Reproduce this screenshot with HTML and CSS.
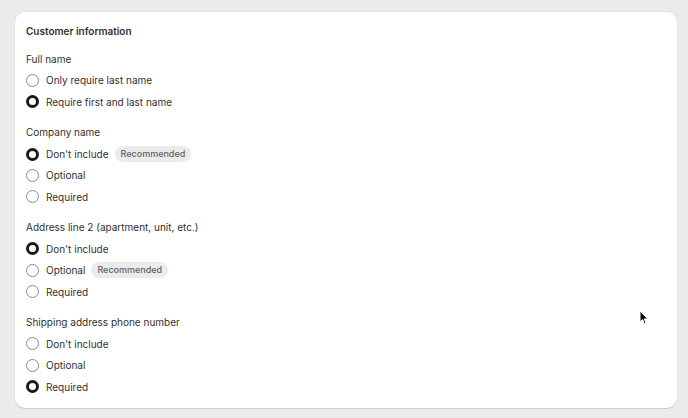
FILE: index.html
```html
<!DOCTYPE html>
<html lang="en">
<head>
    <meta charset="UTF-8">
    <meta name="viewport" content="width=device-width, initial-scale=1.0">
    <title>Customer information</title>
    <link rel="stylesheet" href="styles.css">
</head>
<body>
    <div class="card">
        <h2 class="card-title">Customer information</h2>

        <div class="group">
            <div class="group-label">Full name</div>
            <label class="option"><span class="radio"></span>Only require last name</label>
            <label class="option"><span class="radio checked"></span>Require first and last name</label>
        </div>

        <div class="group">
            <div class="group-label">Company name</div>
            <label class="option"><span class="radio checked"></span>Don't include <span class="badge">Recommended</span></label>
            <label class="option"><span class="radio"></span>Optional</label>
            <label class="option"><span class="radio"></span>Required</label>
        </div>

        <div class="group">
            <div class="group-label">Address line 2 (apartment, unit, etc.)</div>
            <label class="option"><span class="radio checked"></span>Don't include</label>
            <label class="option"><span class="radio"></span>Optional <span class="badge">Recommended</span></label>
            <label class="option"><span class="radio"></span>Required</label>
        </div>

        <div class="group">
            <div class="group-label">Shipping address phone number</div>
            <label class="option"><span class="radio"></span>Don't include</label>
            <label class="option"><span class="radio"></span>Optional</label>
            <label class="option"><span class="radio checked"></span>Required</label>
        </div>
    </div>

    <!-- mouse pointer -->
    <svg class="cursor" width="10" height="15" viewBox="0 0 10 15">
        <path d="M1 1 L1 12 L3.6 9.6 L5.4 13.8 L7 13.1 L5.3 9 L8.8 9 Z" fill="#111" stroke="#fff" stroke-width="1"/>
    </svg>
</body>
</html>
```

FILE: styles.css
```css
body {
    margin: 0;
    padding: 12px 11px 9px 15px;
    background: #ebebeb;
    font-family: Inter, "Noto Sans", Arial, sans-serif;
    font-size: 10px;
    color: #303030;
}
.card {
    background: #fff;
    border-radius: 10px;
    box-shadow: 0 1px 0 rgba(0,0,0,0.1), 0 0 0 1px rgba(0,0,0,0.03);
    padding: 8.5px 11px 11px;
    display: flex;
    flex-direction: column;
    gap: 9.6px;
}
.card-title {
    margin: 0 0 -2.6px;
    font-size: 10px;
    font-weight: 600;
    line-height: 21px;
    color: #303030;
}
.group {
    display: flex;
    flex-direction: column;
}
.group-label {
    line-height: 21.33px;
}
.option {
    display: flex;
    align-items: center;
    height: 21.33px;
    gap: 7px;
}
.radio {
    width: 11px;
    height: 11px;
    border: 1px solid #8a8a8a;
    border-radius: 50%;
    box-sizing: content-box;
    flex: none;
}
.radio.checked {
    width: 7px;
    height: 7px;
    border: 3px solid #1a1a1a;
}
.badge {
    margin-left: -1px;
    background: #ebebeb;
    color: #616161;
    font-size: 9px;
    font-weight: 500;
    line-height: 16px;
    padding: 0 6px;
    border-radius: 8px;
}
.cursor {
    position: absolute;
    left: 639px;
    top: 310px;
}
```
